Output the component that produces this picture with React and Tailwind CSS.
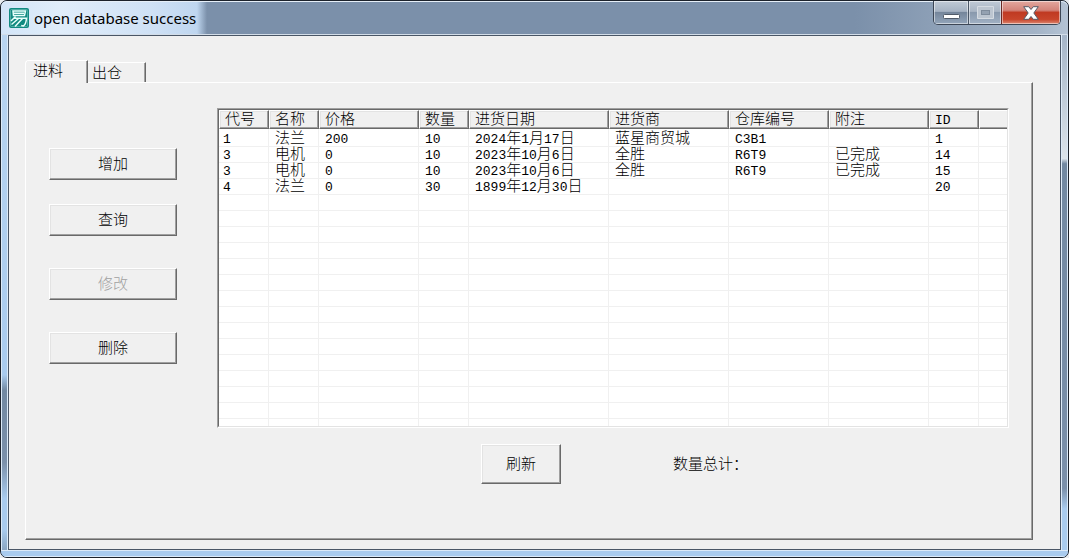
import clsx from 'clsx';

const columns = [
  { key: 'code', label: '代号', width: 'w-[50px]' },
  { key: 'name', label: '名称', width: 'w-[50px]' },
  { key: 'price', label: '价格', width: 'w-[100px]' },
  { key: 'qty', label: '数量', width: 'w-[50px]' },
  { key: 'date', label: '进货日期', width: 'w-[140px]' },
  { key: 'vendor', label: '进货商', width: 'w-[120px]' },
  { key: 'store', label: '仓库编号', width: 'w-[100px]' },
  { key: 'note', label: '附注', width: 'w-[100px]' },
  { key: 'id', label: 'ID', width: 'w-[50px]' },
];

const records = [
  { code: '1', name: '法兰', price: '200', qty: '10', date: '2024年1月17日', vendor: '蓝星商贸城', store: 'C3B1', note: '', id: '1' },
  { code: '3', name: '电机', price: '0', qty: '10', date: '2023年10月6日', vendor: '全胜', store: 'R6T9', note: '已完成', id: '14' },
  { code: '3', name: '电机', price: '0', qty: '10', date: '2023年10月6日', vendor: '全胜', store: 'R6T9', note: '已完成', id: '15' },
  { code: '4', name: '法兰', price: '0', qty: '30', date: '1899年12月30日', vendor: '', store: '', note: '', id: '20' },
];

const emptyRows = Array.from({ length: 14 }, () => ({}));

const raised =
  'border border-t-white border-l-white border-r-[#696969] border-b-[#696969] shadow-[inset_-1px_-1px_0_#a0a0a0,inset_1px_1px_0_#e3e3e3]';

// Latin letters and digits are set smaller, in a fixed-width face
const MixedText = ({ text = '' }) =>
  text
    .split(/([A-Za-z0-9]+)/)
    .filter(Boolean)
    .map((part, i) =>
      /^[A-Za-z0-9]/.test(part) ? (
        <span key={i} className="font-['Liberation_Mono',monospace] text-[13px] leading-none">
          {part}
        </span>
      ) : (
        part
      )
    );

const PushButton = ({ className, children, ...props }) => (
  <button
    type="button"
    className={clsx('bg-[#f0f0f0] text-center disabled:text-[#a0a0a0]', raised, className)}
    {...props}
  >
    {children}
  </button>
);

const AppIcon = () => (
  <svg viewBox="0 0 20 20" className="h-5 w-5 shrink-0" aria-hidden="true">
    <rect width="20" height="20" rx="2" fill="#118a80" />
    <rect x="1.500" y="1.500" width="17" height="17" rx="1" fill="none" stroke="#7cc4bd" strokeWidth=".6" />
    <g fill="none" stroke="#e9fffb" strokeWidth="1.5">
      <path d="M4 3h12.500l-1 4.500H4.500zM5 5.300h10" />
      <path d="M6.500 8.500 2 13M5 10.300h12.500c-.3 4-1.300 6.700-3.300 7.700l-2-.5M9.500 10.500 2.500 16.500M13.500 10.500 6 18.500" />
    </g>
  </svg>
);

const TitleBar = () => (
  <header className="flex h-[34px] items-start justify-between rounded-t-[6px] border-b border-[#d3dde8] bg-[linear-gradient(90deg,#d3e5f8_0px,#e0edfa_60px,#cfe1f5_150px,#bfd6ef_196px,#7b90aa_206px,#7b90aa_80%,#a3b3c6_97%,#b4c3d4_100%)] pr-[7px] pl-[8px] shadow-[inset_0_1px_0_#e6eff8]">
    <div className="flex items-center gap-[5px] pt-[7px]">
      <AppIcon />
      <h1 className="font-['Noto_Sans','Noto_Sans_CJK_SC',sans-serif] text-[15px] leading-5 font-normal text-black">
        open database success
      </h1>
    </div>
    <div className="flex h-6 overflow-hidden rounded-b-[5px] border border-t-0 border-[#3c4655]">
      <button
        type="button"
        aria-label="最小化"
        className="flex w-[35px] items-end justify-center border-r border-[#4a5666] bg-[linear-gradient(#c0cad6_0%,#a5b2c2_45%,#75869b_50%,#93a5ba_100%)] pb-1 shadow-[inset_0_0_0_1px_#ffffff80]"
      >
        <svg width="17" height="6" aria-hidden="true">
          <rect x=".5" y=".5" width="16" height="4" rx="1" fill="#fff" stroke="#505a68" />
        </svg>
      </button>
      <button
        type="button"
        disabled
        aria-label="最大化"
        className="flex w-[33px] items-center justify-center border-r border-[#6b2a24] bg-[linear-gradient(#c0cad6_0%,#a9b5c4_45%,#8999ad_50%,#a1b1c4_100%)] shadow-[inset_0_0_0_1px_#ffffff80]"
      >
        <svg width="17" height="13" aria-hidden="true">
          <path fillRule="evenodd" d="M.5.5h16v12H.5zM4.500 4.500v4h8v-4z" fill="#bcc5d0" stroke="#d5dbe2" />
          <rect x="4.500" y="4.500" width="8" height="4" fill="#94a1b1" stroke="#7e8b9b" />
        </svg>
      </button>
      <button
        type="button"
        aria-label="关闭"
        className="flex w-[58px] items-center justify-center bg-[linear-gradient(#e3a89f_0%,#d3847a_40%,#c03a22_50%,#c8452b_80%,#dc8873_100%)] shadow-[inset_0_0_0_1px_#ffffff80]"
      >
        <svg width="16" height="14" aria-hidden="true">
          <path d="M.7.7H5.700L8 3.500 10.300.7h5L10.800 7l4.500 6.300h-5L8 10.500l-2.300 2.800h-5L5.200 7z" fill="#fff" stroke="#555b68" />
        </svg>
      </button>
    </div>
  </header>
);

const Tabs = () => (
  <div role="tablist" className="flex items-end">
    <button
      type="button"
      role="tab"
      aria-selected="true"
      className="z-10 -mb-px h-[23px] w-[63px] rounded-tl-sm border border-b-0 border-white border-r-[#696969] bg-[#f0f0f0] pb-[3px] pl-[7px] text-left shadow-[inset_-1px_0_0_#a0a0a0]"
    >
      进料
    </button>
    <button
      type="button"
      role="tab"
      aria-selected="false"
      className="h-5 w-[58px] border border-b-0 border-l-0 border-white border-r-[#696969] pl-1 text-left shadow-[inset_-1px_0_0_#a0a0a0]"
    >
      出仓
    </button>
  </div>
);

const StockTable = () => (
  <div className="h-80 overflow-hidden border border-t-[#a0a0a0] border-r-white border-b-white border-l-[#a0a0a0] bg-white">
    <div className="h-full overflow-hidden border border-t-[#696969] border-r-[#e3e3e3] border-b-[#e3e3e3] border-l-[#696969]">
      <table className="w-full table-fixed border-separate border-spacing-0">
        <thead>
          <tr className="h-[19px]">
            {columns.map((col) => (
              <th
                key={col.key}
                className={clsx('bg-[#f0f0f0] p-0 pl-[5px] text-left leading-[17px] font-light', raised, col.width)}
              >
                <MixedText text={col.label} />
              </th>
            ))}
            <td className="border-t border-b border-l border-white border-b-[#696969] bg-[#f0f0f0] p-0 shadow-[inset_0_-1px_0_#a0a0a0]" />
          </tr>
        </thead>
        <tbody>
          <tr aria-hidden="true" className="h-0.5">
            {columns.map((col) => (
              <td key={col.key} className="border-r border-[#f0f0f0] p-0" />
            ))}
            <td className="p-0" />
          </tr>
          {[...records, ...emptyRows].map((row, i) => (
            <tr key={i} className="h-4">
              {columns.map((col) => (
                <td
                  key={col.key}
                  className="border-r border-b border-[#f0f0f0] p-0 pl-1.5 leading-[15px] whitespace-nowrap first:pl-1"
                >
                  <MixedText text={row[col.key]} />
                </td>
              ))}
              <td className="border-b border-[#f0f0f0] p-0" />
            </tr>
          ))}
          <tr aria-hidden="true" className="h-4">
            {columns.map((col) => (
              <td key={col.key} className="border-r border-[#f0f0f0] p-0" />
            ))}
            <td className="p-0" />
          </tr>
        </tbody>
      </table>
    </div>
  </div>
);

const App = () => {
  return (
    <div className="min-h-screen bg-[#e8ecf0]">
      <div className="flex min-h-screen flex-col overflow-hidden rounded-[7px] border border-[#1c222b] bg-[#a9cbee] font-['Liberation_Serif','Noto_Sans_CJK_SC',sans-serif] text-[15px] leading-4 font-light text-black">
        <TitleBar />
        <div className="flex grow">
          <div className="w-[7px] shrink-0 border-x border-[#dceaf8] bg-[linear-gradient(#b9d5f1_0%,#a9cbee_66%,#7289a2_69%,#7b90aa_83%,#a9cbee_90%,#a9cbee_96%,#8ba6c2_100%)]" />
          <main className="flex min-w-0 grow flex-col border border-[#4a5666] bg-[#f0f0f0] pt-6 pr-[27px] pb-[9px] pl-4">
            <Tabs />
            <section
              role="tabpanel"
              className="flex grow gap-10 border border-t-white border-r-[#696969] border-b-[#696969] border-l-white pt-[25px] pr-[23px] pl-[23px] shadow-[inset_-1px_-1px_0_#a0a0a0]"
            >
              <div className="flex w-32 shrink-0 flex-col gap-8 pt-10">
                <div className="flex flex-col gap-6">
                  <PushButton className="h-8">增加</PushButton>
                  <PushButton className="h-8">查询</PushButton>
                </div>
                <PushButton className="h-8" disabled>
                  修改
                </PushButton>
                <PushButton className="h-8">删除</PushButton>
              </div>
              <div className="min-w-0 grow">
                <StockTable />
                <div className="flex items-center gap-28 pt-4 pl-[33.333%]">
                  <PushButton className="h-10 w-20">刷新</PushButton>
                  <p>数量总计：</p>
                </div>
              </div>
            </section>
          </main>
          <div className="w-[7px] shrink-0 border-x border-[#dceaf8] bg-[linear-gradient(#a5b5c8_0%,#dbe3ea_24%,#7289a2_25%,#7b90aa_88%,#a9cbee_92%,#a9cbee_100%)]" />
        </div>
        <div className="h-[7px] shrink-0 border-y border-[#dceaf8] bg-[#a9cbee]" />
      </div>
    </div>
  );
};

export default App;
